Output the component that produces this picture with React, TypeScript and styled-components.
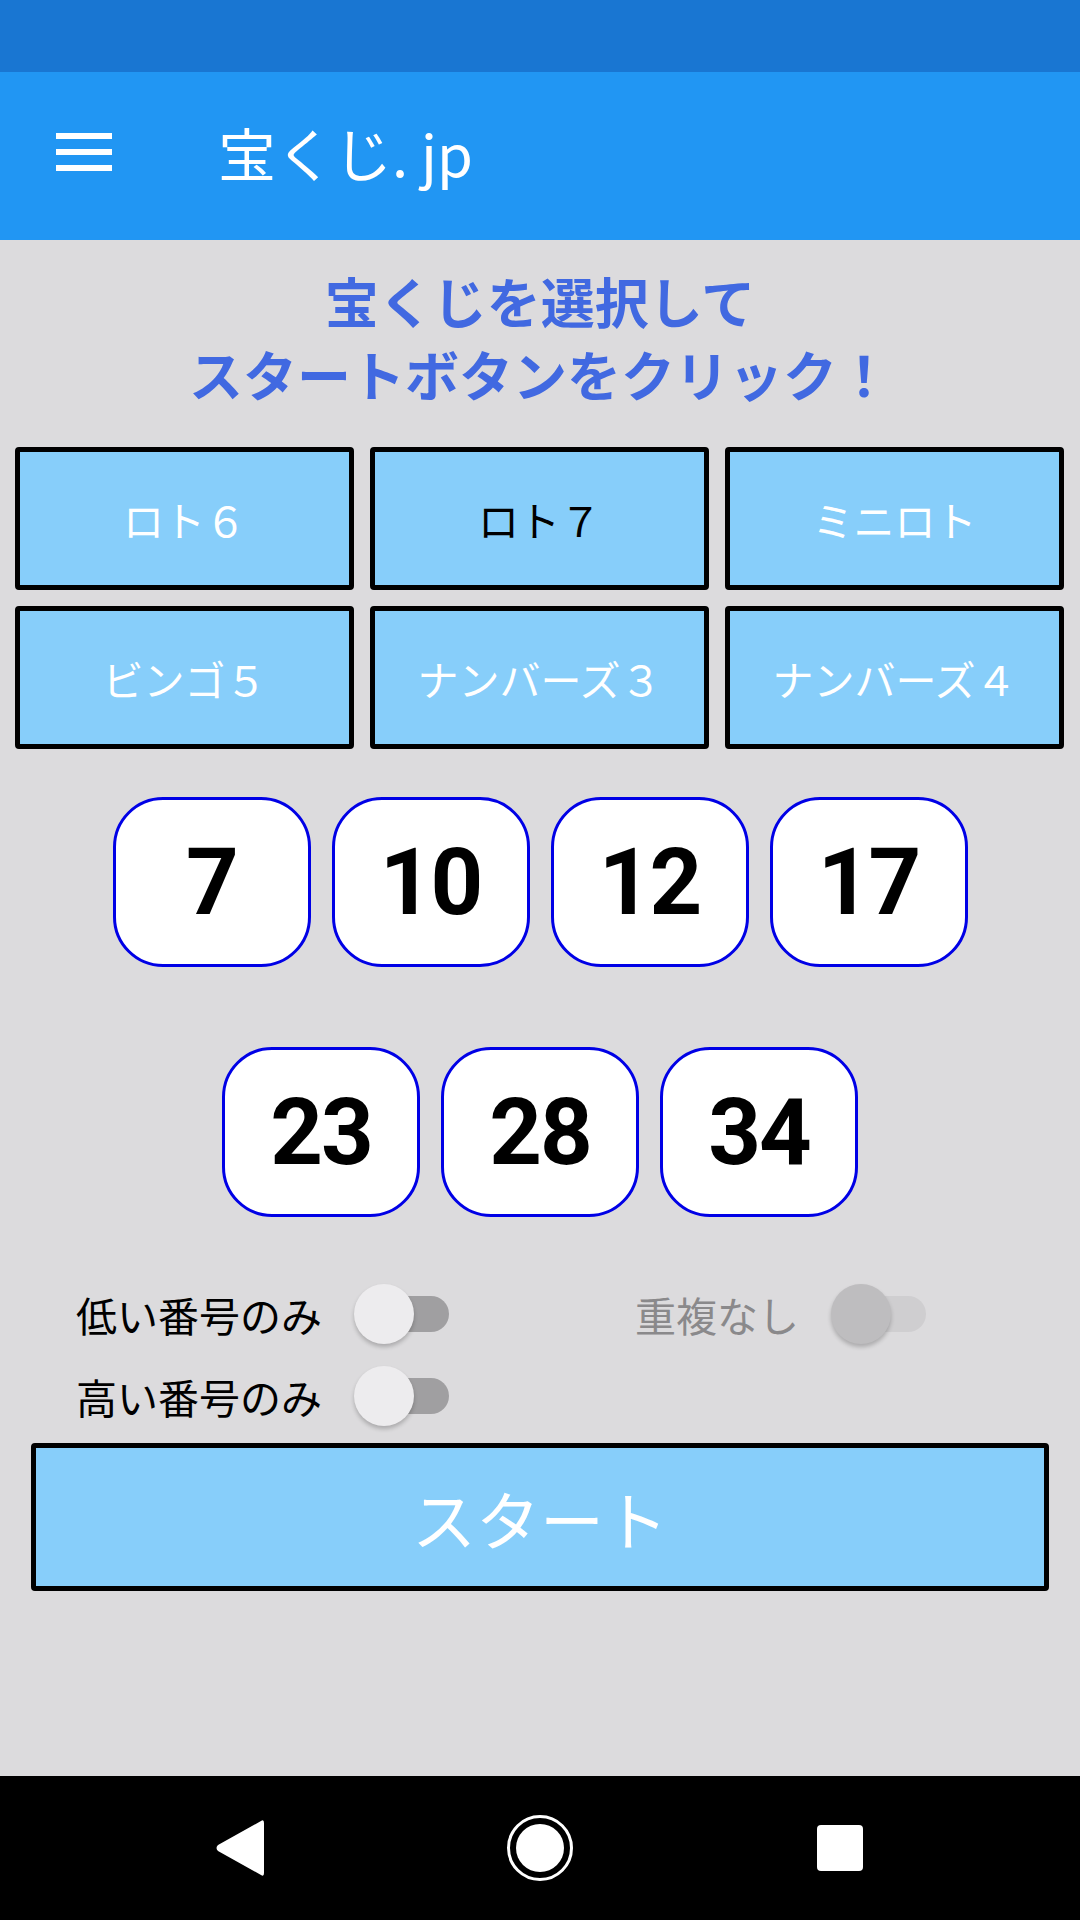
import React, { useState } from "react";
import styled, { createGlobalStyle } from "styled-components";

const GlobalStyle = createGlobalStyle`
  html, body {
    margin: 0;
    padding: 0;
    background: #dcdbdd;
  }
  * {
    box-sizing: border-box;
  }
`;

const Screen = styled.div`
  width: 1080px;
  height: 1920px;
  display: flex;
  flex-direction: column;
  background: #dcdbdd;
  font-family: "Noto Sans CJK JP", "Noto Sans", sans-serif;
  overflow: hidden;
`;

const StatusBar = styled.div`
  height: 72px;
  background: #1976d2;
`;

const AppBar = styled.header`
  height: 168px;
  background: #2196f3;
  display: flex;
  align-items: center;
`;

const MenuButton = styled.div`
  width: 56px;
  margin-left: 56px;
  margin-right: 106px;
  display: flex;
  flex-direction: column;
  gap: 10px;
  margin-top: -8px;
`;

const MenuLine = styled.span`
  display: block;
  height: 6px;
  background: #fff;
`;

const Title = styled.h1`
  margin: 0;
  color: #fff;
  font-size: 58px;
  font-weight: 400;
  margin-top: -8px;
`;

const Content = styled.main`
  flex: 1;
  display: flex;
  flex-direction: column;
  padding-top: 24px;
`;

const Heading = styled.p`
  margin: 0;
  text-align: center;
  color: #4169e1;
  font-size: 54px;
  line-height: 73px;
  font-weight: 700;
`;

const LotteryGrid = styled.div`
  display: grid;
  grid-template-columns: repeat(3, 1fr);
  grid-auto-rows: 143px;
  gap: 16px;
  padding: 0 16px 0 15px;
  margin-top: 37px;
`;

const LotteryButton = styled.button<{ $active?: boolean }>`
  background: #87cefa;
  border: 5px solid #000;
  border-radius: 4px;
  color: ${(p) => (p.$active ? "#000" : "#fff")};
  font-family: "Noto Sans CJK JP", sans-serif;
  font-size: 41px;
  padding: 0;
  cursor: pointer;
`;

const BallRow = styled.div<{ $top: number }>`
  display: flex;
  justify-content: center;
  gap: 21px;
  margin-top: ${(p) => p.$top}px;
`;

const Ball = styled.div`
  width: 198px;
  height: 170px;
  border: 3px solid #0000e6;
  border-radius: 50px;
  background: #fff;
  display: flex;
  align-items: center;
  justify-content: center;
  font-family: Roboto, "Liberation Sans", sans-serif;
  font-weight: 700;
  font-size: 92px;
  letter-spacing: -2px;
  color: #000;
`;

const OptionGrid = styled.div`
  display: grid;
  grid-template-columns: 559px 1fr;
  grid-auto-rows: 60px;
  row-gap: 22px;
  padding-left: 76px;
  margin-top: 67px;
`;

const Option = styled.label<{ $disabled?: boolean }>`
  display: flex;
  align-items: center;
  gap: 32px;
  font-size: 41px;
  color: ${(p) => (p.$disabled ? "#8a898b" : "#000")};
`;

const SwitchBox = styled.span`
  position: relative;
  width: 95px;
  height: 60px;
  display: inline-block;
`;

const Track = styled.span<{ $disabled?: boolean }>`
  position: absolute;
  left: 14px;
  right: 0;
  top: 12px;
  height: 36px;
  border-radius: 18px;
  background: ${(p) => (p.$disabled ? "#cfced0" : "#a09fa1")};
`;

const Thumb = styled.span<{ $disabled?: boolean }>`
  position: absolute;
  left: 0;
  top: 0;
  width: 60px;
  height: 60px;
  border-radius: 50%;
  background: ${(p) => (p.$disabled ? "#bebdbf" : "#edecee")};
  box-shadow: 0 3px 4px rgba(0, 0, 0, 0.22);
`;

const StartButton = styled.button`
  margin: 17px 31px 0 31px;
  height: 148px;
  background: #87cefa;
  border: 5px solid #000;
  border-radius: 4px;
  color: #fff;
  font-family: "Noto Sans CJK JP", sans-serif;
  font-size: 64px;
  padding: 0;
  cursor: pointer;
`;

const NavBar = styled.nav`
  height: 144px;
  background: #000;
  display: flex;
  align-items: center;
  justify-content: center;
  gap: 200px;
`;

const NavSlot = styled.div`
  width: 100px;
  height: 100px;
  display: flex;
  align-items: center;
  justify-content: center;
`;

const Switch: React.FC<{ disabled?: boolean }> = ({ disabled }) => (
  <SwitchBox>
    <Track $disabled={disabled} />
    <Thumb $disabled={disabled} />
  </SwitchBox>
);

const lotteries = ["ロト６", "ロト７", "ミニロト", "ビンゴ５", "ナンバーズ３", "ナンバーズ４"];

const App: React.FC = () => {
  const [selected, setSelected] = useState<number>(1);
  const numbers = [7, 10, 12, 17, 23, 28, 34];

  return (
    <>
      <GlobalStyle />
      <Screen>
        <StatusBar />
        <AppBar>
          <MenuButton>
            <MenuLine />
            <MenuLine />
            <MenuLine />
          </MenuButton>
          <Title>宝くじ. jp</Title>
        </AppBar>
        <Content>
          <Heading>
            宝くじを選択して
            <br />
            スタートボタンをクリック！
          </Heading>
          <LotteryGrid>
            {lotteries.map((name, i) => (
              <LotteryButton key={i} $active={selected === i} onClick={() => setSelected(i)}>
                {name}
              </LotteryButton>
            ))}
          </LotteryGrid>
          <BallRow $top={48}>
            {numbers.slice(0, 4).map((n) => (
              <Ball key={n}>{n}</Ball>
            ))}
          </BallRow>
          <BallRow $top={80}>
            {numbers.slice(4).map((n) => (
              <Ball key={n}>{n}</Ball>
            ))}
          </BallRow>
          <OptionGrid>
            <Option>
              低い番号のみ
              <Switch />
            </Option>
            <Option $disabled>
              重複なし
              <Switch disabled />
            </Option>
            <Option>
              高い番号のみ
              <Switch />
            </Option>
          </OptionGrid>
          <StartButton>スタート</StartButton>
        </Content>
        <NavBar>
          <NavSlot>
            <svg width="50" height="58" viewBox="0 0 50 58">
              <path d="M46 2 Q49 0 49 4 L49 54 Q49 58 46 56 L3 32 Q0 29 3 26 Z" fill="#fff" />
            </svg>
          </NavSlot>
          <NavSlot>
            <svg width="68" height="68" viewBox="0 0 68 68">
              <circle cx="34" cy="34" r="31.5" fill="none" stroke="#fff" strokeWidth="3" />
              <circle cx="34" cy="34" r="24" fill="#fff" />
            </svg>
          </NavSlot>
          <NavSlot>
            <svg width="46" height="46" viewBox="0 0 46 46">
              <rect x="0" y="0" width="46" height="46" rx="4" fill="#fff" />
            </svg>
          </NavSlot>
        </NavBar>
      </Screen>
    </>
  );
};

export default App;
